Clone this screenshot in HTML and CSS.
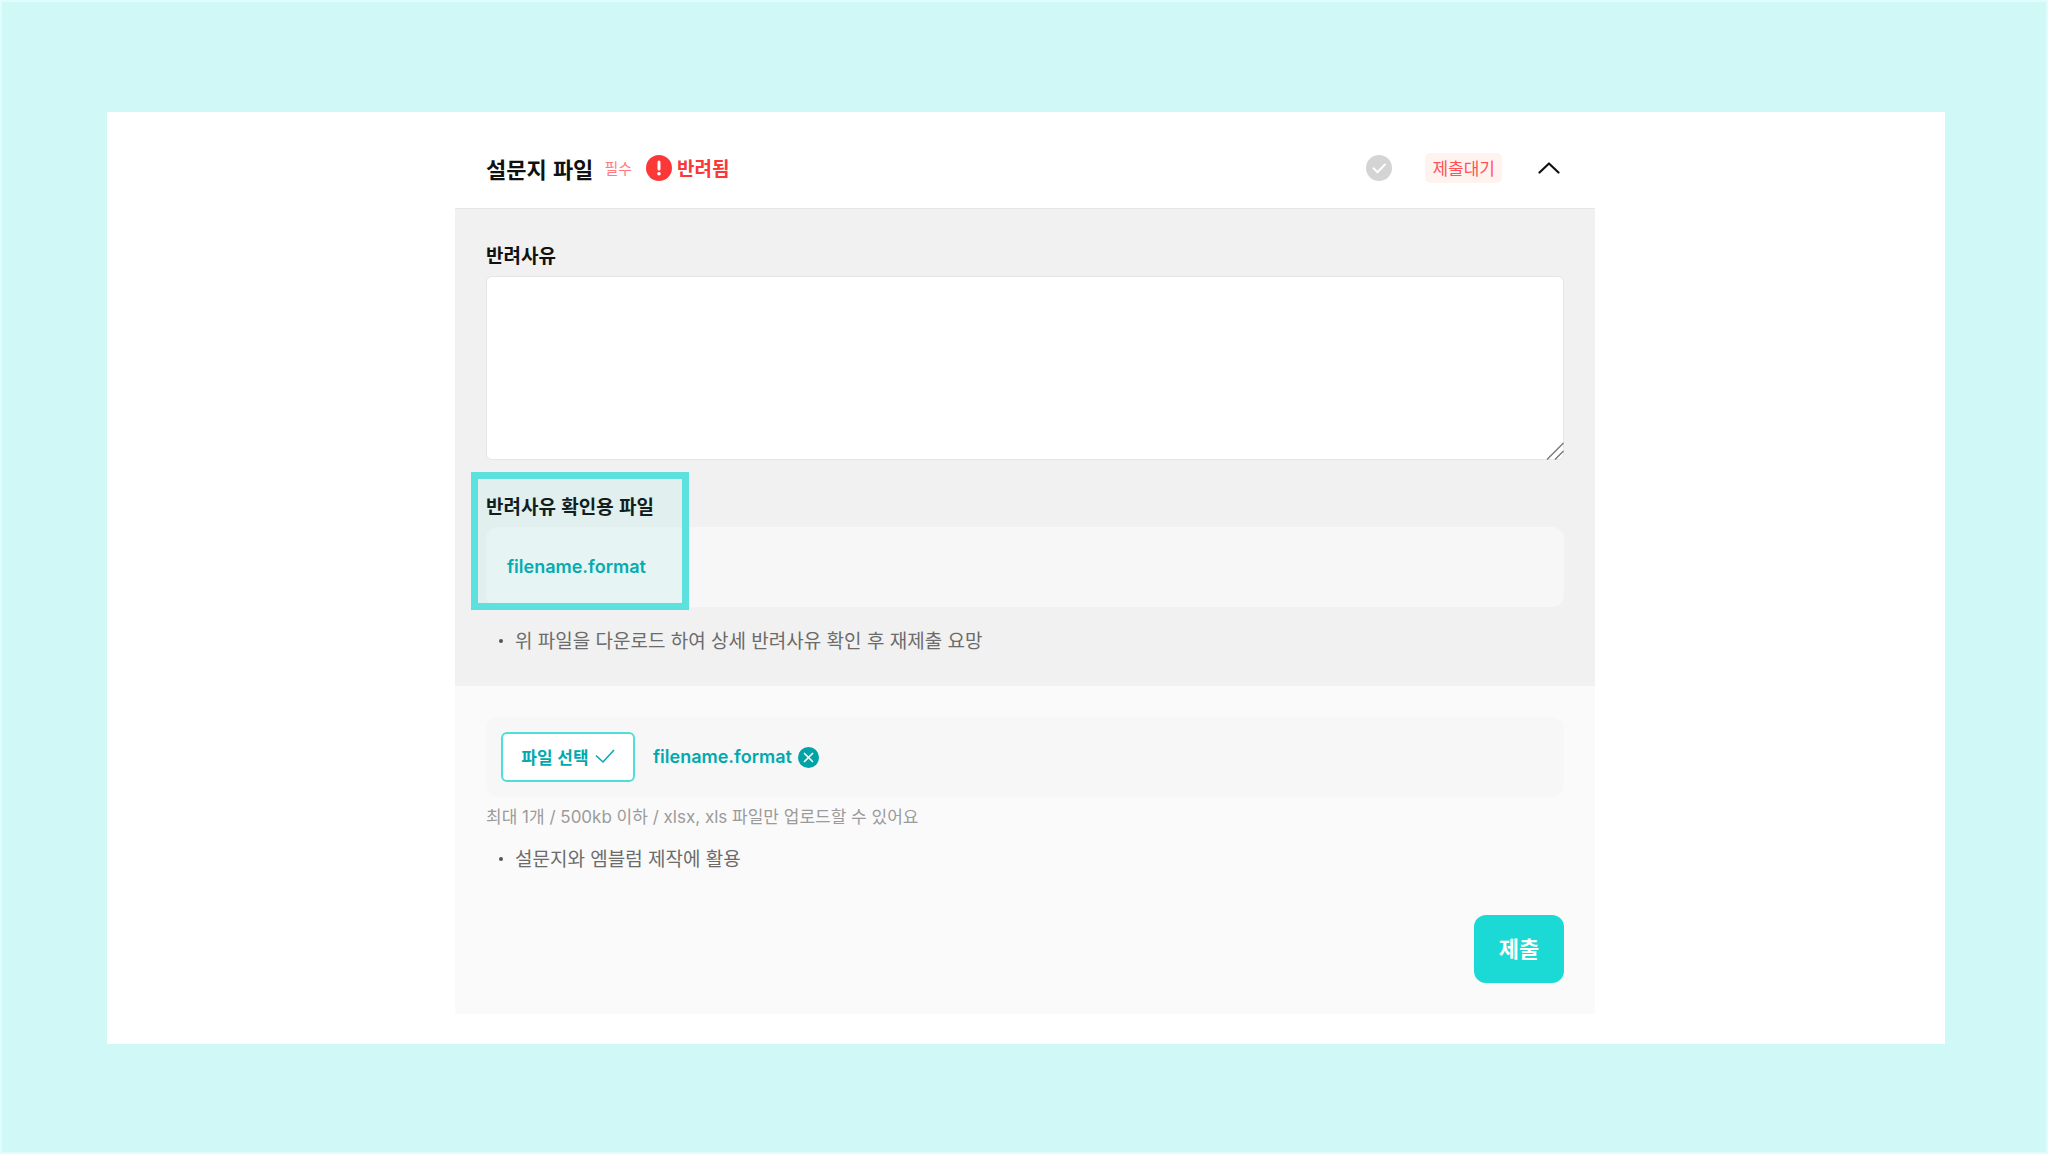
FILE: index.html
```html
<!DOCTYPE html>
<html lang="ko">
<head>
<meta charset="utf-8">
<meta name="viewport" content="width=device-width, initial-scale=1">
<title>설문지 파일</title>
<link rel="stylesheet" href="styles.css">
</head>
<body>
<main class="stage">
  <form class="card">
    <header class="card-header">
      <h1 class="title">설문지 파일</h1>
      <span class="required">필수</span>
      <span class="status">
        <svg width="26" height="26" viewBox="0 0 26 26" aria-hidden="true"><circle cx="13" cy="13" r="13" fill="#fb3737"/><path d="M13 7v7" stroke="#fff" stroke-width="3" stroke-linecap="round"/><circle cx="13" cy="18.800" r="1.800" fill="#fff"/></svg>
        반려됨
      </span>
      <svg class="done" width="26" height="26" viewBox="0 0 26 26" aria-hidden="true"><circle cx="13" cy="13" r="13" fill="#d4d4d4"/><path d="M7.500 13.200l4 4 7.500-7.800" fill="none" stroke="#fff" stroke-width="2" stroke-linecap="round" stroke-linejoin="round"/></svg>
      <span class="badge">제출대기</span>
      <button class="toggle" type="button" aria-label="접기">
        <svg width="22" height="14" viewBox="0 0 22 14" aria-hidden="true"><path d="M1.500 11.500L11 2.500l9.500 9" fill="none" stroke="#111" stroke-width="2.200" stroke-linecap="round" stroke-linejoin="round"/></svg>
      </button>
    </header>

    <section class="reject">
      <label class="label" for="reason">반려사유</label>
      <div class="reason-wrap">
        <textarea class="reason" id="reason"></textarea>
        <svg class="grip" width="18" height="18" viewBox="0 0 18 18" aria-hidden="true"><path d="M1 17.500L17.500 1M9 17.500L17.500 9" stroke="#777" stroke-width="1.400"/></svg>
      </div>
      <div class="check-file">
        <h2 class="label">반려사유 확인용 파일</h2>
        <div class="file-box"><a class="file-link" href="#">filename.format</a></div>
        <div class="highlight"></div>
      </div>
      <ul class="notes">
        <li>위 파일을 다운로드 하여 상세 반려사유 확인 후 재제출 요망</li>
      </ul>
    </section>

    <section class="upload">
      <div class="file-box picker">
        <button class="select" type="button">파일 선택
          <svg width="20" height="16" viewBox="0 0 20 16" aria-hidden="true"><path d="M1 7.500l7 6.500L19 2" fill="none" stroke="#00a9ae" stroke-width="1.500"/></svg>
        </button>
        <a class="file-link" href="#">filename.format</a>
        <button class="remove" type="button" aria-label="파일 삭제">
          <svg width="21" height="21" viewBox="0 0 21 21" aria-hidden="true"><circle cx="10.500" cy="10.500" r="10.500" fill="#00a3a8"/><path d="M6.500 6.500l8 8M14.500 6.500l-8 8" stroke="#fff" stroke-width="1.700" stroke-linecap="round"/></svg>
        </button>
      </div>
      <p class="hint">최대 1개 / 500kb 이하 / xlsx, xls 파일만 업로드할 수 있어요</p>
      <ul class="notes">
        <li>설문지와 엠블럼 제작에 활용</li>
      </ul>
      <button class="submit" type="submit">제출</button>
    </section>
  </form>
</main>
</body>
</html>
```
FILE: styles.css
```css
* {
  box-sizing: border-box;
}

body {
  margin: 0;
  min-height: 100vh;
  padding: 110px 101px 108px 105px;
  border: 2px solid #e0fdfb;
  background: #cff8f7;
  color: #111;
  font-family: "Noto Sans CJK KR", sans-serif;
  font-size: 19px;
  line-height: 28px;
}

h1, h2, p, ul {
  margin: 0;
}

button {
  font-family: inherit;
  padding: 0;
  border: 0;
  background: none;
  cursor: pointer;
}

svg {
  display: block;
  flex: none;
}

.stage {
  padding: 16px 18px 30px 16px;
  background: #fff;
}

.card {
  max-width: 1140px;
  margin: 0 auto;
}

.card-header {
  display: flex;
  align-items: center;
  height: 80px;
  padding: 0 35px 0 31px;
}

.title {
  font-size: 22px;
  font-weight: 700;
}

.required {
  margin-left: 11px;
  color: #ff7b80;
  font-size: 15px;
}

.status {
  display: flex;
  align-items: center;
  gap: 5px;
  margin-left: 14px;
  color: #fb3737;
  font-size: 19px;
  font-weight: 700;
}

.done {
  margin-left: auto;
}

.badge {
  margin: 0 36px 0 33px;
  padding: 1px 7px;
  border-radius: 5px;
  background: #fff3f0;
  color: #ff5358;
  font-size: 17px;
}

.reject {
  padding: 32px 31px;
  border-top: 1px solid #e6e6e6;
  background: #f1f1f1;
}

.label {
  display: block;
  font-size: 19px;
  font-weight: 700;
}

.reason-wrap {
  position: relative;
  margin-top: 7px;
}

.reason {
  display: block;
  width: 100%;
  height: 184px;
  padding: 14px;
  border: 1px solid #e6e6e6;
  border-radius: 6px;
  background: #fff;
  font: inherit;
  resize: none;
}

.grip {
  position: absolute;
  right: 0;
  bottom: 0;
}

.check-file {
  position: relative;
  margin-top: 32px;
}

.highlight {
  position: absolute;
  top: -20px;
  left: -15px;
  width: 218px;
  height: 138px;
  border: 7px solid #5de1df;
  background: rgba(27, 217, 212, 0.07);
  pointer-events: none;
}

.file-box {
  display: flex;
  align-items: center;
  height: 80px;
  border-radius: 12px;
  background: #f7f7f7;
}

.check-file .file-box {
  margin-top: 7px;
  padding-left: 21px;
}

.file-link {
  color: #00a9ae;
  font-family: Inter, sans-serif;
  font-size: 18px;
  font-weight: 600;
  text-decoration: none;
}

.notes {
  margin-top: 19px;
  padding: 0;
  list-style: none;
  color: #6b6b6b;
}

.notes li {
  display: flex;
  align-items: center;
}

.notes li::before {
  content: "";
  width: 4px;
  height: 4px;
  margin: 2px 12px 0 13px;
  border-radius: 50%;
  background: #555;
}

.upload {
  display: flex;
  flex-direction: column;
  padding: 31px;
  background: #fafafa;
}

.picker {
  padding-left: 15px;
}

.select {
  display: flex;
  align-items: center;
  justify-content: center;
  gap: 6px;
  width: 134px;
  height: 50px;
  margin-right: 18px;
  padding-bottom: 2px;
  border: 2px solid #4fdedb;
  border-radius: 6px;
  background: #fff;
  color: #00a9ae;
  font-size: 17px;
  font-weight: 700;
}

.remove {
  margin-left: 6px;
}

.hint {
  margin-top: 6px;
  color: #9b9b9b;
  font-family: Inter, "Noto Sans CJK KR", sans-serif;
  font-size: 17px;
}

.upload .notes {
  margin-top: 13px;
}

.submit {
  align-self: flex-end;
  width: 90px;
  height: 68px;
  margin-top: 43px;
  padding-bottom: 4px;
  border-radius: 12px;
  background: #1bd9d4;
  color: #fff;
  font-size: 22px;
  font-weight: 700;
}
```
